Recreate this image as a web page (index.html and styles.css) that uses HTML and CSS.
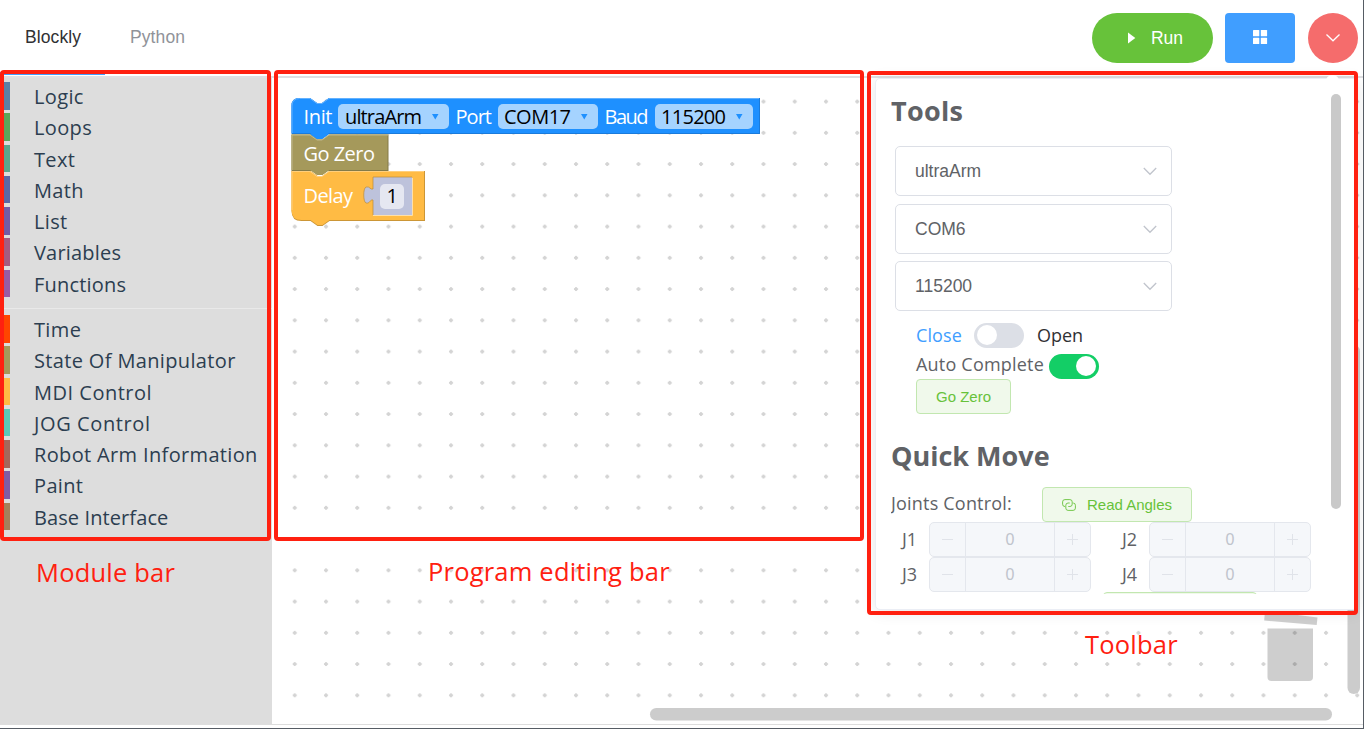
FILE: index.html
```html
<!DOCTYPE html>
<html lang="en">
<head>
<meta charset="utf-8">
<title>Blockly</title>
<link rel="stylesheet" href="styles.css">
</head>
<body>
<div class="app">
  <header class="header">
    <nav class="tabs"><a class="tab active">Blockly</a><a class="tab">Python</a></nav>
    <div class="actions">
      <button class="btn run"><svg width="9" height="12" viewBox="0 0 9 12"><path d="M1 .5L8.3 6 1 11.5z" fill="#fff"/></svg><span>Run</span></button>
      <button class="btn grid-btn"><svg width="16" height="16" viewBox="0 0 16 16" fill="#fff"><rect x="1" y="0" width="6.3" height="6.300" rx=".6"/><rect x="8.800" y="0" width="6.300" height="6.300" rx=".6"/><rect x="1" y="7.800" width="6.300" height="6.300" rx=".6"/><rect x="8.800" y="7.800" width="6.300" height="6.300" rx=".6"/></svg></button>
      <button class="btn more"><svg width="16" height="10" viewBox="0 0 16 10"><path d="M1.5 1.500L8 7.800l6.500-6.300" fill="none" stroke="#fff" stroke-width="1.300"/></svg></button>
    </div>
  </header>
  <main class="main">
    <aside class="sidebar">
      <ul class="cats">
        <li class="cat logic">Logic</li>
        <li class="cat loops">Loops</li>
        <li class="cat text">Text</li>
        <li class="cat math">Math</li>
        <li class="cat list">List</li>
        <li class="cat vars">Variables</li>
        <li class="cat funcs">Functions</li>
        <li class="sep"></li>
        <li class="cat time">Time</li>
        <li class="cat state">State Of Manipulator</li>
        <li class="cat mdi">MDI Control</li>
        <li class="cat jog">JOG Control</li>
        <li class="cat info">Robot Arm Information</li>
        <li class="cat paint">Paint</li>
        <li class="cat base">Base Interface</li>
      </ul>
    </aside>
    <section class="workspace">
      <svg class="canvas" width="1091" height="646" viewBox="272 78 1091 646">
        <defs>
          <pattern id="dots" x="279.050" y="85.950" width="31.250" height="31.250" patternUnits="userSpaceOnUse">
            <path d="M13.700 15.600h4M15.700 13.600v4" stroke="#d4d4d4" stroke-width="2"/>
          </pattern>
        </defs>
        <rect x="272" y="78" width="1091" height="646" fill="url(#dots)"/>
        <g fill="#000" opacity=".19">
          <path d="M1265 611l52.500 6.500-.8 7.500-52.500-4.500z"/>
          <path d="M1267.500 628.500h45.500v48.500q0 4-4 4h-37.500q-4 0-4-4z"/>
        </g>
        <rect x="650" y="708" width="682" height="12.500" rx="6.250" fill="#ccc"/>
        <rect x="1347.500" y="345" width="12.500" height="349" rx="6.250" fill="#ccc"/>
        <g class="block">
          <path d="M291.500 106q0-8 8-8h10.500l7 5h5l7-5h431v36h-431l-7 5h-5l-7-5h-18.500z" fill="#1a7bdb"/>
          <path d="M291.500 106q0-8 8-8h10.500l7 5h5l7-5h430v35h-430l-7 5h-5l-7-5h-18.500z" fill="#1e90ff"/>
          <path d="M292 133v-27q0-7.500 7.500-7.500h10.500l7 5h5l7-5h430" fill="none" stroke="#62b1ff"/>
          <path d="M291.500 134.500h19l7 5h5l7-5h59v36.500h-97z" fill="#847b49"/>
          <path d="M291.500 134.500h19l7 5h5l7-5h58v35.500h-58l-7 5h-5l-7-5h-19z" fill="#a5995b"/>
          <path d="M292 170v-35h18l7 5h5l7-5h59" fill="none" stroke="#c0b88c"/>
          <path d="M310 134l7 5h5l7-5z" fill="#1e90ff"/>
          <path d="M291.500 171h19l7 5h5l7-5h95.500v50h-95.500l-7 5h-5l-7-5h-9q-10 0-10-10z" fill="#cc9636"/>
          <path d="M291.500 171h19l7 5h5l7-5h94.500v49h-94.500l-7 5h-5l-7-5h-9q-10 0-10-10z" fill="#ffbb44"/>
          <path d="M292 210v-38.500h18l7 5h5l7-5h95" fill="none" stroke="#ffcf7c"/>
          <path d="M310 170l7 5h5l7-5z" fill="#a5995b"/>
          <path d="M373 177h39v38h-39v-15c-3-1-3 4-7 3-3-1-3-15 0-16 4-1 4 3 7 2z" fill="#bdc2db"/>
          <path d="M373 215v-15c-3-1-3 4-7 3-3-1-3-15 0-16 4-1 4 3 7 2v-12h39" fill="none" stroke="#b98b3a" stroke-opacity=".7"/>
          <path d="M373 215.500h39.500V178" fill="none" stroke="#ffe0a8"/>
          <rect x="338" y="104" width="111" height="25" rx="5" fill="#a5d3ff"/>
          <rect x="498" y="104" width="100" height="25" rx="5" fill="#a5d3ff"/>
          <rect x="655" y="104" width="98" height="25" rx="5" fill="#a5d3ff"/>
          <rect x="380" y="184" width="24" height="25" rx="5" fill="#e5e7f1"/>
          <g fill="#1e90ff"><path d="M432 114h6.500l-3.250 5.500zM581 114h6.500l-3.250 5.500zM736 114h6.500l-3.250 5.500z"/></g>
          <g class="label">
            <text x="303.500" y="123.500" textLength="29">Init</text>
            <text x="455.500" y="123.500" textLength="36.500">Port</text>
            <text x="604.500" y="123.500" textLength="44">Baud</text>
            <text x="303.500" y="160.500" textLength="71.500">Go Zero</text>
            <text x="303.500" y="202.500" textLength="49.500">Delay</text>
          </g>
          <g class="value">
            <text x="345" y="123.500" textLength="77">ultraArm</text>
            <text x="504" y="123.500" textLength="67">COM17</text>
            <text x="661" y="123.500" textLength="65">115200</text>
            <text x="386.500" y="203">1</text>
          </g>
        </g>
      </svg>
    </section>
  </main>
  <div class="panel">
    <div class="panel-body">
      <h2 class="tools">Tools</h2>
      <div class="select">ultraArm<svg width="14" height="9" viewBox="0 0 14 9"><path d="M.8 1L7 7.300 13.200 1"/></svg></div>
      <div class="select">COM6<svg width="14" height="9" viewBox="0 0 14 9"><path d="M.8 1L7 7.300 13.200 1"/></svg></div>
      <div class="select">115200<svg width="14" height="9" viewBox="0 0 14 9"><path d="M.8 1L7 7.300 13.200 1"/></svg></div>
      <div class="line first"><span class="close">Close</span><i class="switch"></i><span class="open">Open</span></div>
      <div class="line second"><span class="auto">Auto Complete</span><i class="switch on"></i></div>
      <button class="plain zero">Go Zero</button>
      <h2 class="quick">Quick Move</h2>
      <div class="joint-head"><span class="jc">Joints Control:</span><button class="plain read"><svg width="14" height="12" viewBox="0 0 14 12" fill="none" stroke="#67c23a" stroke-width=".9"><path d="M3 7.500A2.300 2.300 0 0 1 .6 5.200V2.900A2.300 2.300 0 0 1 2.900.6h5A2.300 2.300 0 0 1 10.200 2.900v2.300a2.300 2.300 0 0 1-2.300 2.300H6.300M11.200 4a2.300 2.300 0 0 1 2.200 2.300v2.800a2.300 2.300 0 0 1-2.300 2.300h-5a2.300 2.300 0 0 1-2.300-2.300V6.300A2.300 2.300 0 0 1 6.100 4h1.600"/></svg>Read Angles</button></div>
      <div class="joints">
        <span>J1</span><div class="num"><b class="minus"></b><em>0</em><b class="plus"></b></div><span>J2</span><div class="num"><b class="minus"></b><em>0</em><b class="plus"></b></div>
        <span>J3</span><div class="num"><b class="minus"></b><em>0</em><b class="plus"></b></div><span>J4</span><div class="num"><b class="minus"></b><em>0</em><b class="plus"></b></div>
      </div>
      <div class="plain next"></div>
    </div>
    <i class="thumb"></i><i class="arrow"></i>
  </div>
  <div class="mark mark-module"></div>
  <div class="mark mark-program"></div>
  <div class="mark mark-tool"></div>
  <div class="note note-module">Module bar</div>
  <div class="note note-program">Program editing bar</div>
  <div class="note note-tool">Toolbar</div>
</div>
</body>
</html>
```
FILE: styles.css
```css
* { box-sizing: border-box; }
body { margin: 0; background: #fff; font-family: "Open Sans", "Noto Sans", sans-serif; }
button { font: inherit; margin: 0; padding: 0; border: 0; }
.app { position: relative; width: 1364px; height: 729px; overflow: hidden; display: flex; flex-direction: column; border-right: 1px solid #565c64; border-bottom: 1px solid #565c64; }
.header { height: 78px; flex: none; display: flex; justify-content: space-between; border-bottom: 2px solid #dfdfe2; font-family: "Liberation Sans", Arial, sans-serif; }
.tabs { display: flex; height: 75px; }
.tab { font-size: 17.5px; line-height: 74px; padding-left: 25px; width: 105px; color: #909399; letter-spacing: .1px; }
.tab.active { color: #303133; border-bottom: 3px solid #409eff; }
.actions { display: flex; padding: 13px 5px 0 0; }
.btn { height: 50px; display: flex; align-items: center; justify-content: center; color: #fff; }
.run { width: 121px; border-radius: 25px; background: #67c23a; font-size: 17.5px; gap: 15px; margin-right: 12px; padding-left: 5px; }
.grid-btn { width: 70px; border-radius: 4px; background: #409eff; margin-right: 13px; }
.more { width: 50px; border-radius: 50%; background: #f56c6c; }
.main { display: flex; height: 647px; flex: none; border-bottom: 1px solid #ddd; }
.sidebar { width: 272px; flex: none; background: #ddd; padding-top: 4px; }
.cats { list-style: none; margin: 0; padding: 0; }
.cat { height: 27.5px; margin-bottom: 3.75px; border-left: 10px solid; padding-left: 24px; font-size: 20px; line-height: 30.5px; letter-spacing: .35px; color: #2c3e50; white-space: nowrap; }
.sep { height: 1px; background: #e9e9e9; margin: 11px 0 6px; }
.logic { border-color: #5b80a5; }
.loops { border-color: #5ba55b; }
.text { border-color: #5ba58c; }
.math { border-color: #5b67a5; }
.list { border-color: #745ba5; }
.vars { border-color: #a55b80; letter-spacing: .2px; }
.funcs { border-color: #995ba5; letter-spacing: .2px; }
.time { border-color: #ff4500; }
.state { border-color: #a5995b; }
.mdi { border-color: #ffbb44; letter-spacing: .5px; }
.jog { border-color: #5bc8b8; letter-spacing: .6px; }
.info { border-color: #a5675b; }
.paint { border-color: #805ba5; }
.base { border-color: #a5805b; letter-spacing: .1px; }
.workspace { flex: 1; min-width: 0; overflow: hidden; }
.canvas { display: block; }
.label { fill: #fff; font-size: 20px; }
.value { fill: #000; font-size: 20px; }
.panel { position: absolute; left: 875px; top: 78px; width: 483px; height: 532px; background: #fff; border: 1px solid #ebeef5; border-radius: 5px; box-shadow: 0 2px 15px rgba(0,0,0,.1); padding: 10px 0 0 15px; }
.panel-body { height: 505px; overflow: hidden; color: #606266; }
.thumb { position: absolute; left: 455px; top: 15px; width: 10px; height: 415px; border-radius: 5px; background: #c9c9c9; }
.arrow { position: absolute; left: 450px; top: -4px; width: 13px; height: 6px; border-radius: 6px 6px 0 0; background: #fff; }
h2 { margin: 0; font-size: 27px; line-height: 34px; height: 52px; font-weight: 700; }
.tools { height: 57px; line-height: 44px; letter-spacing: .3px; }
.select { width: 277px; height: 50px; margin: 0 0 8px 4px; border: 1px solid #dcdfe6; border-radius: 5px; padding: 0 14px 0 19px; display: flex; align-items: center; justify-content: space-between; font: 17.5px "Liberation Sans", Arial, sans-serif; }
.select + .select + .select { margin-top: -1px; }
.select svg { fill: none; stroke: #c0c4cc; stroke-width: 1.3; }
.line { display: flex; align-items: center; padding-left: 25px; font-size: 18px; height: 30px; }
.first { padding-top: 2px; }
.close { color: #409eff; width: 58px; letter-spacing: .1px; }
.open { color: #303133; margin-left: 13px; }
.auto { width: 133px; white-space: nowrap; letter-spacing: .2px; }
.switch { width: 50px; height: 25px; border-radius: 13px; background: #dcdfe6; padding: 2.5px; flex: none; }
.switch::before { content: ""; display: block; width: 20px; height: 20px; border-radius: 50%; background: #fff; }
.switch.on { background: #13ce66; margin-top: 4px; padding-left: 27px; }
.plain { background: #f0f9eb; border: 1px solid #c2e7b0; border-radius: 4px; color: #67c23a; font: 15px "Liberation Sans", Arial, sans-serif; }
.zero { display: block; margin-left: 25px; width: 95px; height: 35px; }
.quick { margin-top: 25px; height: 48px; }
.joint-head { display: flex; height: 35px; font-size: 18px; }
.jc { width: 151px; line-height: 33px; white-space: nowrap; letter-spacing: .2px; }
.read { width: 150px; height: 35px; display: flex; align-items: center; justify-content: center; gap: 11px; }
.joints { display: grid; grid-template-columns: 38px 182px 38px 182px; grid-auto-rows: 35px; }
.joints > span { padding-left: 11px; font-size: 18px; line-height: 34px; }
.num { width: 162px; height: 35px; border: 1px solid #e4e7ed; border-radius: 5px; background: #f5f7fa; display: flex; color: #c0c4cc; font: 16px/33px "Liberation Sans", Arial, sans-serif; text-align: center; }
.num b { width: 35px; background: linear-gradient(#e0e3e9, #e0e3e9) 50% 50% / 11px 1px no-repeat; }
.num .plus { background: linear-gradient(#e0e3e9, #e0e3e9) 50% 50% / 11px 1px no-repeat, linear-gradient(#e0e3e9, #e0e3e9) 50% 50% / 1px 11px no-repeat; }
.num em { flex: 1; font-style: normal; border: solid #e4e7ed; border-width: 0 1px; }
.next { margin-left: 212px; width: 154px; height: 35px; }
.mark { position: absolute; border: 4px solid #ff2010; border-radius: 4px; }
.mark-module { left: 0; top: 70px; width: 271px; height: 471px; }
.mark-program { left: 274px; top: 70px; width: 590px; height: 471px; }
.mark-tool { left: 867px; top: 71px; width: 491px; height: 544px; }
.note { position: absolute; color: #ff2010; font-size: 25.5px; line-height: 34px; letter-spacing: .2px; white-space: nowrap; }
.note-module { left: 36px; top: 555px; }
.note-program { left: 428px; top: 554px; }
.note-tool { left: 1085px; top: 627px; }
```
